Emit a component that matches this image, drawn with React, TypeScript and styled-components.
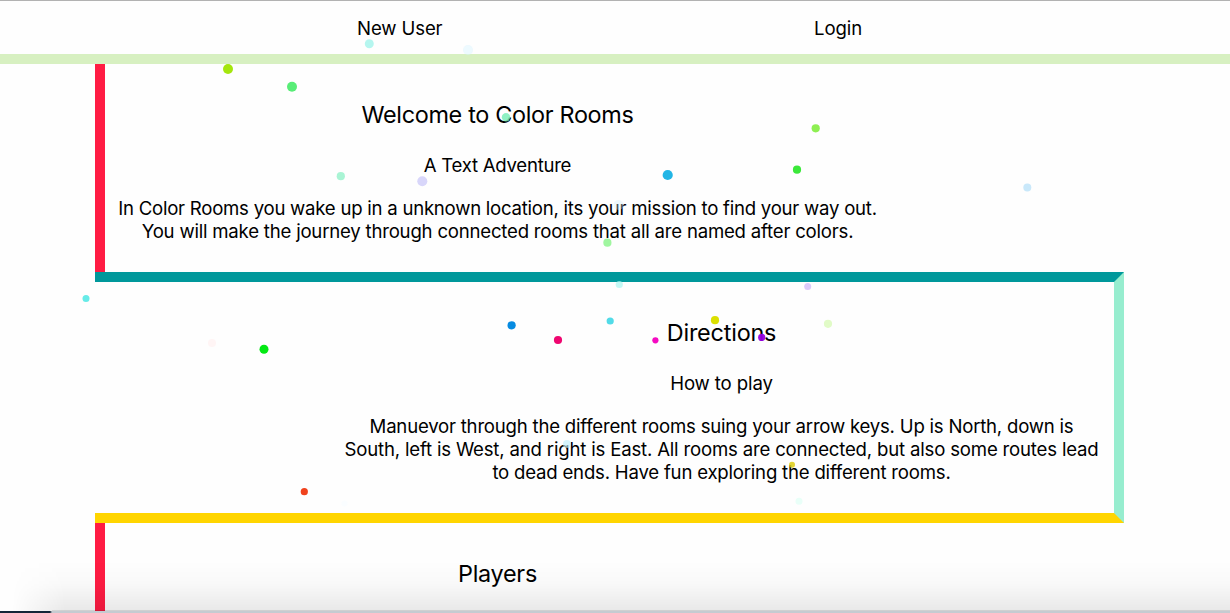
import React from 'react';
import styled, { createGlobalStyle } from 'styled-components';

const GlobalStyle = createGlobalStyle`
  * { box-sizing: border-box; }
  html, body { margin: 0; padding: 0; height: 100%; overflow: hidden; }
  body { background: #fefefe; color: #000; font-family: Inter, "Liberation Sans", sans-serif; }
`;

const Page = styled.div`
  position: relative;
  height: 613px;
  overflow: hidden;
  border-top: 1px solid #b2b2b2;
`;

const Nav = styled.nav`
  display: flex;
  align-items: flex-start;
  gap: 372px;
  height: 63px;
  padding: 16px 0 0 357px;
  border-bottom: 10px solid #d7f0c1;
`;

const NavLink = styled.a<{ $width: number; $spacing: number }>`
  width: ${p => p.$width}px;
  font-size: 18.6px;
  line-height: 23px;
  letter-spacing: ${p => p.$spacing}px;
  white-space: nowrap;
`;

const Main = styled.main`
  width: 1029px;
  margin-left: 95px;
`;

const Room = styled.section<{ $side: 'left' | 'right'; $height: number }>`
  display: flex;
  justify-content: ${p => (p.$side === 'left' ? 'flex-start' : 'flex-end')};
  height: ${p => p.$height}px;
  ${p =>
    p.$side === 'left'
      ? 'border-left: 10px solid #ff1c43;'
      : 'border-top: 10px solid #00989b; border-right: 10px solid #97edcf; border-bottom: 10px solid #ffd500;'}
`;

const Content = styled.div`
  display: flex;
  flex-direction: column;
  align-items: center;
  width: 785px;
  padding-top: 36px;
  text-align: center;
`;

const Title = styled.h1<{ $spacing: number }>`
  margin: 0;
  font-size: 23.4px;
  font-weight: 400;
  line-height: 29px;
  letter-spacing: ${p => p.$spacing}px;
`;

const Subtitle = styled.h2<{ $spacing: number }>`
  margin: 25px 0 20px;
  font-size: 18.6px;
  font-weight: 400;
  line-height: 23px;
  letter-spacing: ${p => p.$spacing}px;
`;

const Line = styled.span<{ $spacing: number }>`
  font-size: 18.6px;
  line-height: 23px;
  letter-spacing: ${p => p.$spacing}px;
  white-space: nowrap;
`;

const Confetti = styled.svg`
  position: absolute;
  top: -1px;
  left: 0;
  pointer-events: none;
`;

const Shade = styled.div`
  position: absolute;
  left: 0;
  right: 0;
  bottom: 2px;
  height: 50px;
  background: linear-gradient(to bottom, rgba(0,0,0,0), rgba(0,0,0,0.02) 45%, rgba(0,0,0,0.085));
  mask-image: linear-gradient(to right, transparent 12px, #000 65px);
`;

const Dock = styled.div`
  position: absolute;
  left: 0;
  right: 0;
  bottom: 0;
  height: 2px;
  background: linear-gradient(to right, #142638 50px, #c5cbd1 52px);
  box-shadow: 52px -1px 0 rgba(0, 0, 0, 0.1);
`;

const dots: [number, number, number, string][] = [
  [369.3, 43.7, 4.5, '#b5f6ef'], [468, 50, 5, 'rgba(220,245,255,0.5)'],
  [228, 69, 5, '#a4e60d'], [292, 86.7, 5, '#58ed77'],
  [506, 117.3, 4.2, 'rgba(115,238,180,0.8)'], [815.7, 128.3, 4.1, '#8eef52'],
  [797, 169.7, 4.1, '#3be83a'], [340.8, 176.2, 4.1, '#a9f4d4'],
  [422.3, 181.3, 5, '#d8d6fa'], [667.7, 175, 5.1, '#22b5e5'],
  [1027.3, 187.5, 4, '#c9e8fa'], [618.6, 205, 5, 'rgba(205,236,250,0.35)'],
  [607.4, 242.7, 4.1, '#a0f6a0'], [619.3, 284.5, 3.6, 'rgba(170,245,240,0.7)'],
  [807.7, 286.5, 3.5, '#dbcafa'], [86, 298.6, 3.5, '#67ebe8'],
  [511.6, 325.3, 4.1, '#078be1'], [610.2, 321, 3.6, '#52dbe8'],
  [558, 340, 4.1, '#ef0670'], [655.4, 340.3, 3.1, '#f50ac2'],
  [715, 320.2, 4.1, '#dce000'], [828, 323.8, 4.1, '#e1fbc7'],
  [761.7, 337.4, 3.6, 'rgba(150,0,225,0.95)'], [212, 343, 4, '#fff5f5'],
  [264, 349.2, 4.5, '#04e914'], [567, 444, 4, 'rgba(190,238,250,0.65)'],
  [792, 464.7, 3, 'rgba(220,205,20,0.85)'], [304.3, 491.7, 3.6, '#f0421d'],
  [799, 501.3, 3.5, '#e9fff8'], [344.5, 503.5, 3, '#fafdff'],
];

export default function App() {
  return (
    <Page>
      <GlobalStyle />
      <Nav>
        <NavLink $width={85} $spacing={-0.12}>New User</NavLink>
        <NavLink $width={48} $spacing={-0.08}>Login</NavLink>
      </Nav>
      <Main>
        <Room $side="left" $height={208}>
          <Content>
            <Title $spacing={-0.32}>Welcome to Color Rooms</Title>
            <Subtitle $spacing={-0.27}>A Text Adventure</Subtitle>
            <Line $spacing={-0.247}>In Color Rooms you wake up in a unknown location, its your mission to find your way out.</Line>
            <Line $spacing={-0.21}>You will make the journey through connected rooms that all are named after colors.</Line>
          </Content>
        </Room>
        <Room $side="right" $height={251}>
          <Content>
            <Title $spacing={-0.2}>Directions</Title>
            <Subtitle $spacing={-0.12}>How to play</Subtitle>
            <Line $spacing={-0.22}>Manuevor through the different rooms suing your arrow keys. Up is North, down is</Line>
            <Line $spacing={-0.185}>South, left is West, and right is East. All rooms are connected, but also some routes lead</Line>
            <Line $spacing={-0.21}>to dead ends. Have fun exploring the different rooms.</Line>
          </Content>
        </Room>
        <Room $side="left" $height={88}>
          <Content>
            <Title $spacing={-0.28}>Players</Title>
          </Content>
        </Room>
      </Main>
      <Confetti width="1230" height="613">
        {dots.map(([x, y, r, fill]) => (
          <circle key={`${x}-${y}`} cx={x} cy={y} r={r} fill={fill} />
        ))}
      </Confetti>
      <Shade />
      <Dock />
    </Page>
  );
}
